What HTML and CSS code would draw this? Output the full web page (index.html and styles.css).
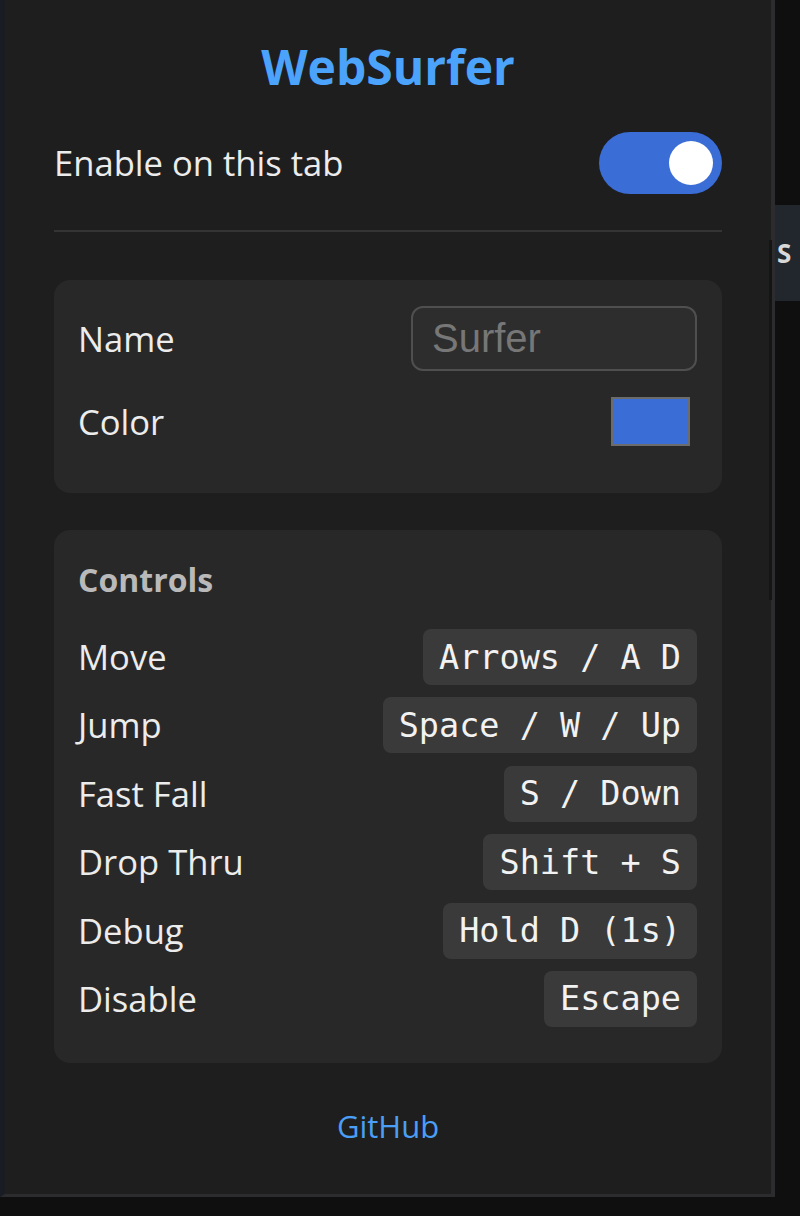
FILE: index.html
```html
<!DOCTYPE html>
<html>
<head>
<meta charset="utf-8">
<link rel="stylesheet" href="styles.css">
</head>
<body>
<div class="stage">
  <div class="popup">
    <h1 class="title">WebSurfer</h1>
    <div class="toggle-row">
      <span class="label">Enable on this tab</span>
      <span class="toggle"><span class="knob"></span></span>
    </div>
    <hr class="divider">
    <section class="card card-settings">
      <div class="field">
        <span class="label">Name</span>
        <input class="name-input" type="text" placeholder="Surfer">
      </div>
      <div class="field">
        <span class="label">Color</span>
        <span class="swatch"></span>
      </div>
    </section>
    <section class="card card-controls">
      <h2 class="card-title">Controls</h2>
      <div class="control"><span class="label">Move</span><kbd class="key">Arrows / A D</kbd></div>
      <div class="control"><span class="label">Jump</span><kbd class="key">Space / W / Up</kbd></div>
      <div class="control"><span class="label">Fast Fall</span><kbd class="key">S / Down</kbd></div>
      <div class="control"><span class="label">Drop Thru</span><kbd class="key">Shift + S</kbd></div>
      <div class="control"><span class="label">Debug</span><kbd class="key">Hold D (1s)</kbd></div>
      <div class="control"><span class="label">Disable</span><kbd class="key">Escape</kbd></div>
    </section>
    <footer class="footer"><a class="link" href="#">GitHub</a></footer>
  </div>
  <div class="page-edge">
    <div class="page-tab"><span class="tab-glyph">S</span></div>
    <div class="scroll-line"></div>
  </div>
</div>
</body>
</html>
```

FILE: styles.css
```css
* { box-sizing: border-box; }

html, body {
  margin: 0;
  padding: 0;
  background: #0f0f10;
  width: 800px;
  height: 1216px;
  overflow: hidden;
}

body {
  font-family: "Open Sans", "Noto Sans", sans-serif;
  color: #ececec;
}

.stage {
  display: flex;
  align-items: flex-start;
}

.popup {
  width: 775px;
  height: 1197px;
  background: #1e1e1e;
  border-left: 5px solid #191c22;
  border-right: 4px solid #2c2c2e;
  border-bottom: 3px solid #2c2c2e;
  padding: 39px 49px 0 49px;
  display: flex;
  flex-direction: column;
}

.title {
  margin: 0;
  text-align: center;
  font-size: 48px;
  line-height: 56px;
  font-weight: 700;
  color: #4ba3fb;
  letter-spacing: 0;
}

.label {
  font-size: 34.6px;
  line-height: 44px;
  color: #ececec;
}

.toggle-row {
  margin-top: 37px;
  height: 62px;
  display: flex;
  align-items: center;
  justify-content: space-between;
}

.toggle {
  width: 123px;
  height: 62px;
  border-radius: 31px;
  background: #3a6dd6;
  display: flex;
  align-items: center;
  justify-content: flex-end;
  padding-right: 9px;
}

.knob {
  width: 44px;
  height: 44px;
  border-radius: 50%;
  background: #ffffff;
}

.divider {
  margin: 36px 0 0 0;
  border: 0;
  height: 2px;
  background: #343434;
}

.card {
  background: #282828;
  border-radius: 16px;
  padding: 25px 25px 0 24px;
}

.card-settings {
  margin-top: 48px;
  height: 213px;
  display: flex;
  flex-direction: column;
  gap: 16px;
}

.field {
  display: flex;
  align-items: center;
  justify-content: space-between;
  height: 67px;
}

.name-input {
  width: 286px;
  height: 65px;
  border: 2px solid #4f4f4f;
  border-radius: 12px;
  background: #2d2d2d;
  padding: 0 19px;
  font-family: "Liberation Sans", Arial, sans-serif;
  font-size: 40px;
  color: #dddddd;
  outline: none;
}

.name-input::placeholder {
  color: #777777;
}

.swatch {
  width: 79px;
  height: 49px;
  margin-right: 7px;
  background: #3a6dd6;
  border: 2px solid #6b6b6b;
}

.card-controls {
  margin-top: 37px;
  height: 533px;
  padding-top: 30px;
}

.card-title {
  margin: 0 0 29px 0;
  font-size: 32px;
  line-height: 40px;
  font-weight: 700;
  color: #b9b9b9;
}

.control {
  display: flex;
  align-items: center;
  justify-content: space-between;
  height: 56px;
  margin-bottom: 12.4px;
}

.key {
  height: 56px;
  display: flex;
  align-items: center;
  padding: 0 16px;
  border-radius: 8px;
  background: #3a3a3a;
  font-family: "DejaVu Sans Mono", "Liberation Mono", monospace;
  font-size: 33.5px;
  color: #f2f2f2;
  white-space: pre;
}

.footer {
  margin-top: 43px;
  text-align: center;
}

.link {
  font-size: 31px;
  line-height: 40px;
  color: #4a9ef6;
  text-decoration: none;
}

.page-edge {
  flex: 1;
  height: 1216px;
  display: flex;
  flex-direction: column;
  position: relative;
}

.page-tab {
  margin-top: 205px;
  height: 96px;
  background: #22272e;
  display: flex;
  align-items: center;
  padding-left: 2px;
}

.tab-glyph {
  font-family: "Open Sans", sans-serif;
  font-weight: 700;
  font-size: 26px;
  color: #d8d8d8;
}

.scroll-line {
  position: absolute;
  left: -6px;
  top: 240px;
  width: 3px;
  height: 360px;
  background: #151515;
}
```
